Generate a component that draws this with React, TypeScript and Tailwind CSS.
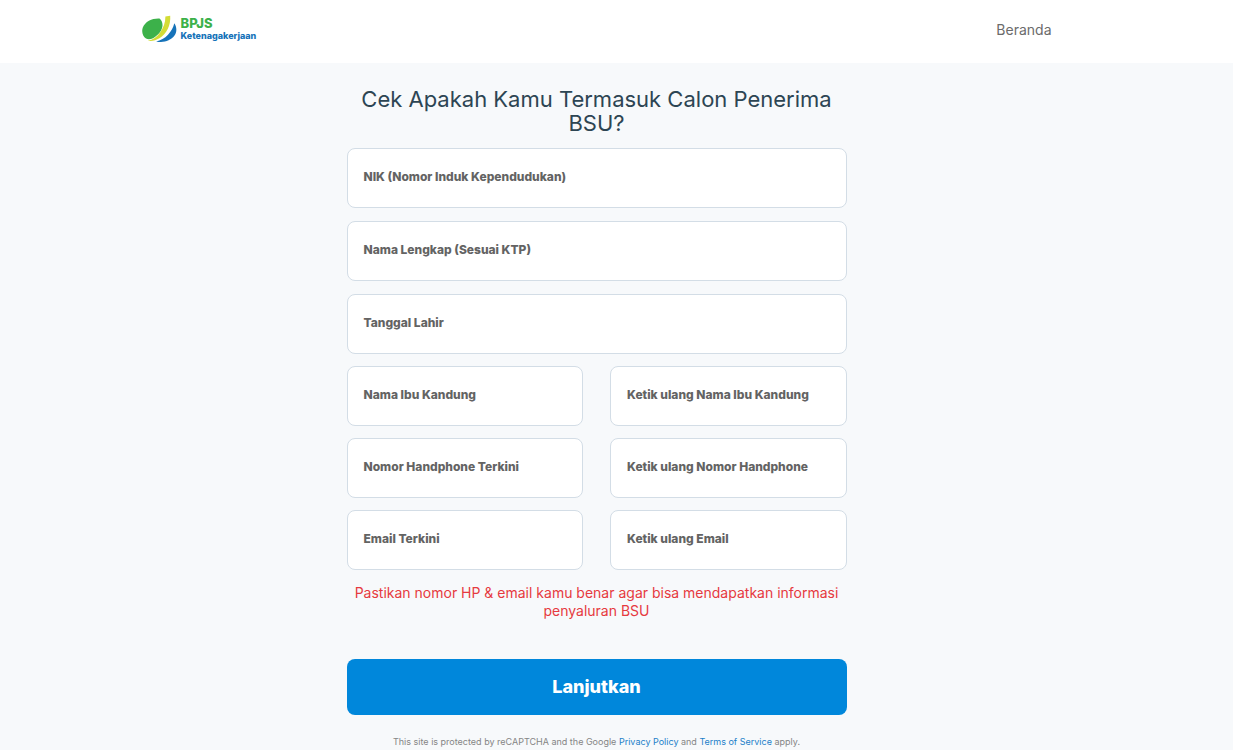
import React from 'react';

interface FieldProps {
  id: string;
  label: string;
  type?: string;
}

const Field: React.FC<FieldProps> = ({ id, label, type = 'text' }) => {
  return (
    <div className="relative">
      <input
        id={id}
        name={id}
        type={type}
        placeholder=" "
        className="peer block w-full h-15 px-4 pt-4 bg-white border border-[#d3dde6] rounded-lg
                   text-sm text-[#555555] focus:outline-none focus:border-[#0087db]"
      />
      <label
        htmlFor={id}
        className="absolute top-5 left-[17px] text-xs leading-[18px] font-extrabold text-[#636363]
                   pointer-events-none peer-focus:top-1 peer-[:not(:placeholder-shown)]:top-1"
      >
        {label}
      </label>
    </div>
  );
};

const Logo: React.FC = () => (
  <a href="#" className="flex items-center gap-1" aria-label="BPJS Ketenagakerjaan">
    <svg className="w-[35px] h-7" viewBox="0 0 35 28" fill="none" xmlns="http://www.w3.org/2000/svg">
      {/* Green leaf */}
      <path
        d="M17.5 3.600C10.500 3.200 3.200 6.400.8 12.600-.8 17.300 1 21.500 4 23.600c2 1.200 4.700.9 7-.4 4.500-2.600 8.300-6.500 9.300-11.300.7-3.500-.4-6.400-2.800-8.300Z"
        fill="#3cb14a"
      />
      {/* Yellow swoosh */}
      <path
        d="M23.400 1.400 28.200.8c.7 9.700-3.600 18-10.800 22.500-3.600 2.200-7.800 3.100-11.600 2.300 5-.9 9.300-3.900 12.300-8.200 3.400-4.800 5.300-9.700 5.300-16Z"
        fill="#d3dc35"
      />
      {/* Blue swoosh */}
      <path
        d="M32.300 8.300c2.600 3.500 2.800 8.700.2 12.300-3.900 5.400-11.400 7.500-18.400 5.800 4.500-.8 8.600-3.200 11.900-6.700 3.200-3.400 5.400-7.200 6.300-11.400Z"
        fill="#1673b9"
      />
    </svg>
    <span className="flex flex-col font-extrabold">
      <span className="text-[13px] leading-[13px] text-[#3cb14a]">BPJS</span>
      <span className="text-[9px] leading-[11px] text-[#1673b9]">Ketenagakerjaan</span>
    </span>
  </a>
);

const App: React.FC = () => {
  return (
    <div className="min-h-screen bg-[#f7f9fb] font-['Inter','Noto_Sans',sans-serif]">
      <header className="bg-white pr-10">
        <div className="flex items-center justify-between max-w-[910px] h-[63px] mx-auto pb-1.5">
          <Logo />
          <nav>
            <a href="#" className="text-sm text-[#6b6b6b]">
              Beranda
            </a>
          </nav>
        </div>
      </header>

      <main className="pr-10">
        <form className="max-w-[500px] mx-auto pt-6 text-center">
          <h1 className="text-[22px] leading-6 text-[#2d4553]">
            Cek Apakah Kamu Termasuk Calon Penerima BSU?
          </h1>

          {/* Identity */}
          <div className="flex flex-col gap-[13px] mt-[13px]">
            <Field id="nik" label="NIK (Nomor Induk Kependudukan)" />
            <Field id="nama" label="Nama Lengkap (Sesuai KTP)" />
            <Field id="tanggal-lahir" label="Tanggal Lahir" />
          </div>

          {/* Fields that are typed twice */}
          <div className="grid grid-cols-2 gap-x-[27px] gap-y-3 mt-3">
            <Field id="ibu" label="Nama Ibu Kandung" />
            <Field id="ibu-ulang" label="Ketik ulang Nama Ibu Kandung" />
            <Field id="hp" label="Nomor Handphone Terkini" type="tel" />
            <Field id="hp-ulang" label="Ketik ulang Nomor Handphone" type="tel" />
            <Field id="email" label="Email Terkini" type="email" />
            <Field id="email-ulang" label="Ketik ulang Email" type="email" />
          </div>

          <p className="mt-3.5 text-sm leading-[18px] text-[#e63a40]">
            Pastikan nomor HP &amp; email kamu benar agar bisa mendapatkan informasi penyaluran BSU
          </p>

          <button
            type="submit"
            className="w-full h-14 mt-[39px] bg-[#0087db] rounded-lg text-lg font-extrabold text-white cursor-pointer"
          >
            Lanjutkan
          </button>

          <p className="mt-5 text-[9px] leading-[14px] text-[#858585]">
            This site is protected by reCAPTCHA and the Google{' '}
            <a href="#" className="text-[#1c7fc9]">Privacy Policy</a> and{' '}
            <a href="#" className="text-[#1c7fc9]">Terms of Service</a> apply.
          </p>
        </form>
      </main>
    </div>
  );
};

export default App;
